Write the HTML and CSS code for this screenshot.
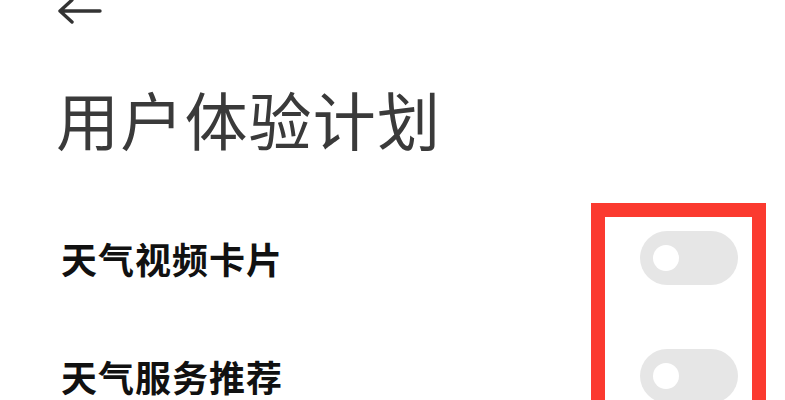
FILE: index.html
```html
<!DOCTYPE html>
<html lang="zh-CN">
<head>
<meta charset="utf-8">
<link rel="stylesheet" href="styles.css">
</head>
<body>
<div class="page">
  <div class="topbar">
    <svg class="back" width="46" height="30" viewBox="0 0 46 30">
      <path d="M44 12 H4 M16 1 L4 12 L16 23" fill="none" stroke="#333" stroke-width="3.4" stroke-linecap="round" stroke-linejoin="round"/>
    </svg>
  </div>
  <h1 class="title">用户体验计划</h1>
  <div class="list">
    <div class="row">
      <span class="label">天气视频卡片</span>
      <span class="toggle"><span class="knob"></span></span>
    </div>
    <div class="row">
      <span class="label">天气服务推荐</span>
      <span class="toggle"><span class="knob"></span></span>
    </div>
  </div>
  <div class="highlight"></div>
</div>
</body>
</html>
```
FILE: styles.css
```css
html, body {
  margin: 0;
  padding: 0;
  background: #ffffff;
}
.page {
  position: relative;
  width: 785px;
  height: 400px;
  overflow: hidden;
  font-family: "Noto Sans CJK SC", "Noto Sans", sans-serif;
}
.topbar {
  height: 30px;
  padding-left: 56px;
  margin-top: -1px;
}
.back {
  display: block;
}
.title {
  margin: 44px 0 0 56px;
  font-size: 63px;
  font-weight: 400;
  color: #3a3a3a;
  line-height: 90px;
  letter-spacing: 1.2px;
}
.list {
  margin-top: 68px;
  padding-left: 61px;
  padding-right: 47px;
}
.row {
  display: flex;
  align-items: center;
  justify-content: space-between;
  height: 54px;
  margin-bottom: 64px;
}
.label {
  font-size: 36px;
  font-weight: 700;
  color: #111;
  letter-spacing: 1px;
}
.toggle {
  position: relative;
  width: 98px;
  height: 54px;
  border-radius: 27px;
  background: #e6e6e6;
}
.knob {
  position: absolute;
  left: 13px;
  top: 14px;
  width: 26px;
  height: 26px;
  border-radius: 50%;
  background: #ffffff;
}
.highlight {
  position: absolute;
  left: 591px;
  top: 203px;
  width: 147px;
  height: 220px;
  border: 14px solid #fb3a2f;
}
```
